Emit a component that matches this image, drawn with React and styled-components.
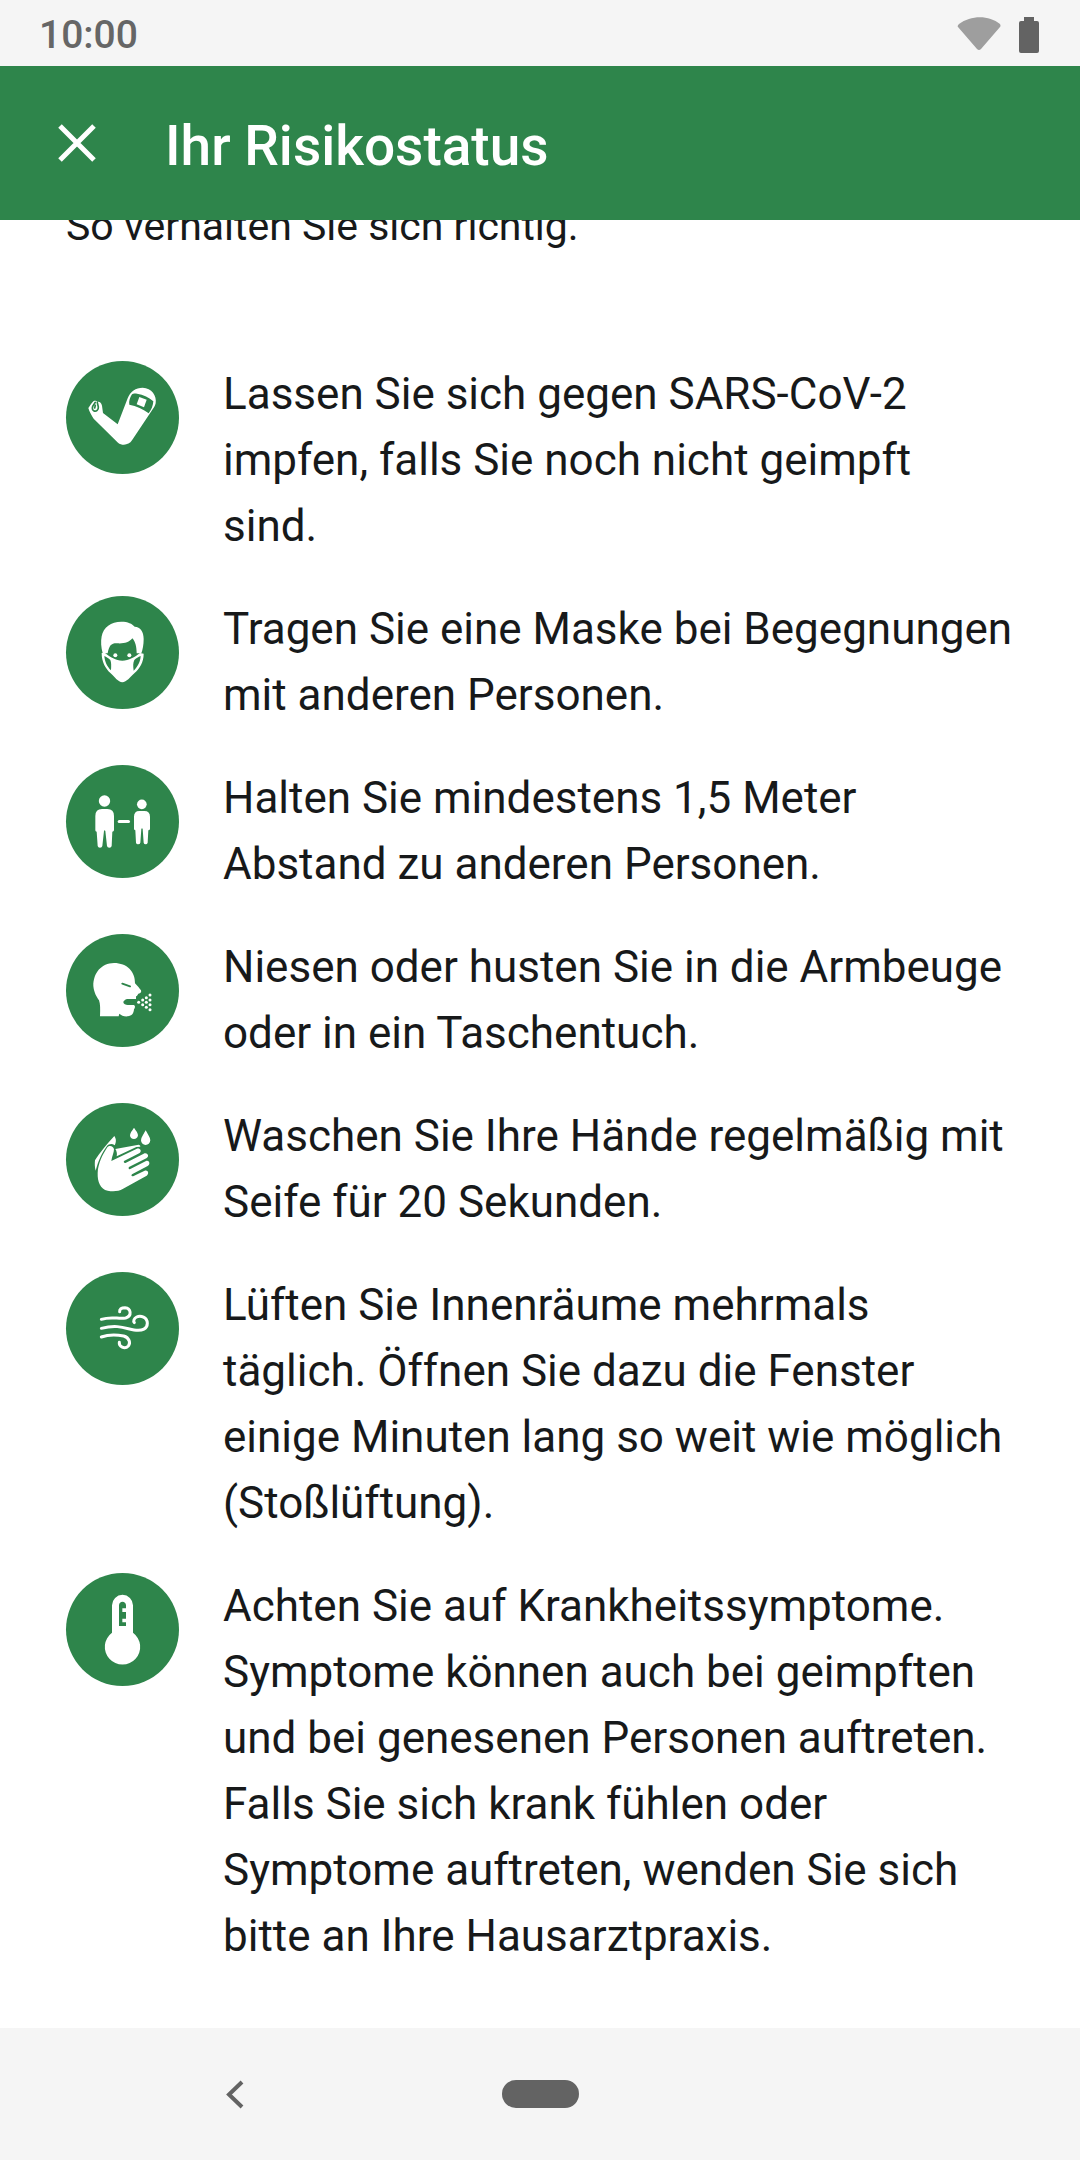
import React from "react";
import styled, { createGlobalStyle } from "styled-components";

const GREEN = "#2e854b";
const BAR = "#f5f5f5";
const GREY = "#636363";

const GlobalStyle = createGlobalStyle`
  * { box-sizing: border-box; }
  body {
    margin: 0;
    background: #ffffff;
    color: #17191a;
    font-family: Roboto, "Liberation Sans", sans-serif;
  }
`;

const Screen = styled.div`
  min-height: 100vh;
  display: flex;
  flex-direction: column;
`;

const StatusBar = styled.div`
  height: 66px;
  padding: 4px 41px 0 39px;
  display: flex;
  align-items: center;
  justify-content: space-between;
  background: ${BAR};
`;

const Clock = styled.time`
  font-size: 39px;
  line-height: 48px;
  font-weight: 500;
  color: #666666;
`;

const StatusIcons = styled.div`
  display: flex;
  align-items: center;
  gap: 18px;
`;

const AppBar = styled.header`
  height: 154px;
  padding: 0 44px;
  display: flex;
  align-items: center;
  gap: 55px;
  background: ${GREEN};
  color: #ffffff;
`;

const IconButton = styled.button`
  display: flex;
  padding: 0;
  border: 0;
  background: none;
  color: inherit;
  cursor: pointer;
`;

const Title = styled.h1`
  margin: 0;
  padding-top: 6px;
  font-size: 55px;
  line-height: 66px;
  font-weight: 500;
`;

const Content = styled.main`
  flex: 1;
  overflow: hidden;
  padding: 0 66px 59px;
`;

const Intro = styled.p`
  margin: -21px 0 107px;
  font-size: 41px;
  line-height: 55px;
`;

const TipList = styled.ul`
  margin: 0;
  padding: 0;
  list-style: none;
  display: flex;
  flex-direction: column;
  gap: 37px;
`;

const Tip = styled.li`
  display: flex;
  align-items: flex-start;
  gap: 44px;
`;

const Badge = styled.svg`
  flex: none;
  width: 113px;
  height: 113px;
  border-radius: 50%;
  background: ${GREEN};
`;

const TipText = styled.p`
  margin: 0;
  flex: 1;
  font-size: 44px;
  line-height: 66px;
`;

const NavBar = styled.nav`
  height: 132px;
  display: grid;
  grid-template-columns: 1fr auto 1fr;
  align-items: center;
  justify-items: center;
  background: ${BAR};
  color: ${GREY};
`;

const HomeButton = styled.button`
  width: 77px;
  height: 28px;
  padding: 0;
  border: 0;
  border-radius: 14px;
  background: ${GREY};
`;

const VaccineArm = () => (
  <>
    <path fill="#fff" d="M85 159 C90 152 95 144 101 138 C105 136 110 138 112 141 C118 139 124 143 126 152 L129 174 L173 208 L203 130 C211 109 227 98 248 98 C275 99 291 122 287 145 C285 153 281 159 276 166 L216 256 C207 271 186 273 174 263 L101 191 C94 180 88 170 85 159 Z" />
    <path fill={GREEN} d="M215 119 C219 115 226 115 231 116 C250 119 268 128 280 139 C279 152 274 165 266 175 C250 162 229 153 208 149 C206 138 210 127 215 119 Z" />
    <path fill="#fff" d="M238 126 L260 134 L252 157 L230 148 Z" />
    <path fill="none" stroke={GREEN} strokeWidth="5" strokeLinecap="round" d="M106 142 L102 148 C96 155 95 164 101 167 C109 171 116 164 115 156 L112 143 M106 151 L104 159" />
  </>
);

const MaskedFace = () => (
  <>
    <path fill="#fff" d="M128 190 C123 172 122 155 125 139 C130 112 153 95 184 95 C204 95 216 101 224 110 C241 111 251 125 251 147 C251 164 248 180 244 190 L230 190 C230 171 226 154 217 145 C208 157 192 161 173 160 C154 159 148 165 143 190 Z" />
    <circle cx="166" cy="196" r="6" fill="#fff" />
    <circle cx="208" cy="196" r="6" fill="#fff" />
    <path fill="#fff" fillRule="evenodd" d="M125 189 L135 189 C151 201 167 212 187 212 C207 212 224 201 240 189 L251 191 C251 217 239 235 223 250 C210 262 200 276 187 277 C174 276 165 262 152 250 C136 235 125 216 125 189 Z M133 198 C134 215 142 230 153 241 C154 226 154 218 151 210 C146 205 139 201 133 198 Z M242 198 C235 201 228 205 223 210 C219 218 219 228 221 242 C233 230 241 216 242 198 Z" />
  </>
);

const Distance = () => (
  <g fill="#fff">
    <circle cx="133.500" cy="126" r="17" />
    <path d="M106 171 Q106 150 126 150 H142 Q162 150 162 171 V214 Q161 218 157 218 L155 261 Q154 266 148 266 Q142 266 141 261 L136 216 Q134 211 132 216 L127 261 Q126 266 120 266 Q114 266 113 261 L110 218 Q106 218 106 214 Z" />
    <circle cx="245.500" cy="136" r="14.500" />
    <path d="M222 173 Q222 156 238 156 H253 Q270 156 270 173 V210 Q269 214 265 214 L263 251 Q262 256 257 256 Q252 256 251 251 L248 210 Q246 206 244 210 L241 251 Q240 256 234 256 Q229 256 228 251 L226 214 Q222 213 222 210 Z" />
    <rect x="173" y="183" width="37" height="9" rx="4.500" />
  </g>
);

const CoughingHead = () => (
  <>
    <path fill="#fff" d="M120 265 C121 244 121 228 117 217 C110 207 102 194 100 174 C100 134 124 106 162 105 C201 105 226 131 225 166 C231 173 239 181 243 187 C245 192 242 196 235 197 C233 202 229 205 228 205 V213 L201 213 C195 215 190 219 190 223 C191 229 197 231 203 231 L222 231 C227 235 225 239 222 244 C221 256 216 264 203 265 C192 266 184 262 178 257 L176 265 Z" />
    <path stroke={GREEN} strokeWidth="6" strokeLinecap="round" d="M187 167 L210 175" />
    {[[236, 223], [248, 216], [248, 230], [259, 209], [259, 223], [259, 238], [270, 201], [270, 216], [270, 230], [270, 245]].map(([x, y]) => (
      <circle key={`${x}-${y}`} cx={x} cy={y} r="4.500" fill="#fff" />
    ))}
  </>
);

const WashingHands = () => (
  <g fill="#fff">
    <path d="M222 92 C228 101 234 108 234 115 C233 123 228 126 222 126 C215 126 210 122 210 115 C210 108 216 101 222 92 Z" />
    <path d="M257 100 C263 112 271 121 271 130 C270 139 264 144 257 144 C249 144 243 138 243 130 C243 121 251 112 257 100 Z" />
    <path d="M107 221 C104 210 104 200 105 190 C117 170 142 139 163 117 C168 124 170 133 164 145 C157 139 147 140 141 147 C127 166 115 190 107 221 Z" />
    <path d="M166 156 L236 143 Q242 145 241 149 L229 150 L170 178 C172 170 170 162 166 156 Z" />
    <path d="M113 228 C114 201 127 174 142 151 C149 142 161 149 162 157 C162 167 156 177 154 192 L229 156 C239 151 247 162 239 168 L192 192 C190 196 193 199 198 197 L251 170 C262 165 270 178 259 184 L207 210 C204 214 207 218 211 216 L258 192 C267 188 273 201 263 207 L216 232 C212 237 216 239 221 237 L254 221 C265 218 268 230 260 236 L188 276 C177 283 158 284 143 281 C121 277 112 254 113 228 Z" />
  </g>
);

const Wind = () => (
  <g fill="none" stroke="#fff" strokeWidth="9" strokeLinecap="round">
    <path d="M124 160 C155 150 175 160 197 156 C217 150 213 126 195 125 C184 125 178 130 179 137" />
    <path d="M124 187 C175 174 198 188 222 192 C248 196 262 188 262 172 C262 154 242 147 230 153 C222 157 219 165 223 170" />
    <path d="M124 213 C149 204 176 207 191 210 C209 215 212 232 205 240 C194 251 176 242 178 229" />
  </g>
);

const Thermometer = () => (
  <>
    <path fill="#fff" d="M156 115 A31.500 31.500 0 0 1 219 115 V197 A53 53 0 1 1 156 197 Z" />
    <path fill={GREEN} d="M177 177 V115 C177 101 198 101 198 115 V124 H187 V135 H198 V155 H187 V166 H198 V177 Z" />
  </>
);

const TIPS = [
  { Icon: VaccineArm, text: "Lassen Sie sich gegen SARS-CoV-2 impfen, falls Sie noch nicht geimpft sind." },
  { Icon: MaskedFace, text: "Tragen Sie eine Maske bei Begegnungen mit anderen Personen." },
  { Icon: Distance, text: "Halten Sie mindestens 1,5 Meter Abstand zu anderen Personen." },
  { Icon: CoughingHead, text: "Niesen oder husten Sie in die Armbeuge oder in ein Taschentuch." },
  { Icon: WashingHands, text: "Waschen Sie Ihre Hände regelmäßig mit Seife für 20 Sekunden." },
  { Icon: Wind, text: "Lüften Sie Innenräume mehrmals täglich. Öffnen Sie dazu die Fenster einige Minuten lang so weit wie möglich (Stoßlüftung)." },
  { Icon: Thermometer, text: "Achten Sie auf Krankheitssymptome. Symptome können auch bei geimpften und bei genesenen Personen auftreten. Falls Sie sich krank fühlen oder Symptome auftreten, wenden Sie sich bitte an Ihre Hausarztpraxis." },
];

export default function App() {
  return (
    <Screen>
      <GlobalStyle />
      <StatusBar>
        <Clock>10:00</Clock>
        <StatusIcons aria-hidden="true">
          <svg width="44" height="36" viewBox="0 0 44 36">
            <path fill="#9e9e9e" d="M2 7 C14 -2 32 -2 43 7 Q44 9 43 10 L24 32 Q22 34 20 32 L1 10 Q0 9 2 7 Z" />
          </svg>
          <svg width="20" height="36" viewBox="0 0 20 36">
            <path fill={GREY} d="M5 0 H15 V4 H18 Q20 4 20 6 V34 Q20 36 18 36 H2 Q0 36 0 34 V6 Q0 4 2 4 H5 Z" />
          </svg>
        </StatusIcons>
      </StatusBar>
      <AppBar>
        <IconButton type="button" aria-label="Schließen">
          <svg width="66" height="66" viewBox="0 0 66 66" aria-hidden="true">
            <path fill="none" stroke="currentColor" strokeWidth="5" d="M16 16 L50 50 M50 16 L16 50" />
          </svg>
        </IconButton>
        <Title>Ihr Risikostatus</Title>
      </AppBar>
      <Content>
        <Intro>So verhalten Sie sich richtig.</Intro>
        <TipList>
          {TIPS.map(({ Icon, text }) => (
            <Tip key={text}>
              <Badge viewBox="18 18 339 339" aria-hidden="true">
                <Icon />
              </Badge>
              <TipText>{text}</TipText>
            </Tip>
          ))}
        </TipList>
      </Content>
      <NavBar>
        <IconButton type="button" aria-label="Zurück">
          <svg width="66" height="66" viewBox="0 0 66 66" aria-hidden="true">
            <path fill="none" stroke="currentColor" strokeWidth="4" d="M24 21 L11 33.500 L24 46" />
          </svg>
        </IconButton>
        <HomeButton type="button" aria-label="Startseite" />
      </NavBar>
    </Screen>
  );
}
